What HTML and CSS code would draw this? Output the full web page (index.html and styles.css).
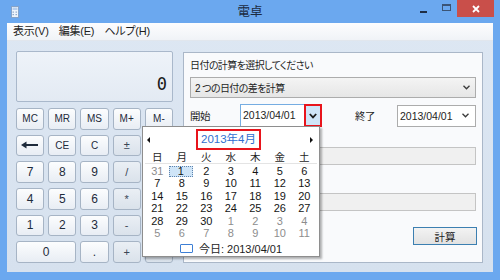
FILE: index.html
```html
<!DOCTYPE html>
<html lang="ja">
<head>
    <meta charset="UTF-8">
    <meta name="viewport" content="width=device-width, initial-scale=1.0">
    <title>電卓</title>
    <link rel="stylesheet" href="styles.css">
</head>
<body>
<div class="window">
    <div class="titlebar">
        <div class="app-icon">
            <svg width="8" height="12" viewBox="0 0 8 12">
                <rect x="0.5" y="0.5" width="7" height="11" fill="#eef4fb" stroke="#86a3c8"/>
                <rect x="1.5" y="1.5" width="5" height="2.5" fill="#b7cfee"/>
                <rect x="1.5" y="5.5" width="1.5" height="1.2" fill="#8fa9cb"/>
                <rect x="4.5" y="5.5" width="1.5" height="1.2" fill="#8fa9cb"/>
                <rect x="1.5" y="8" width="1.5" height="1.2" fill="#8fa9cb"/>
                <rect x="4.5" y="8" width="1.5" height="1.2" fill="#8fa9cb"/>
            </svg>
        </div>
        <div class="title">電卓</div>
        <div class="controls">
            <span class="ctl ctl-min"><i></i></span>
            <span class="ctl ctl-max"><i></i></span>
            <span class="ctl ctl-close">
                <svg width="8" height="8" viewBox="0 0 8 8">
                    <path d="M1 1 L7 7 M7 1 L1 7" stroke="#fff" stroke-width="1.8"/>
                </svg>
            </span>
        </div>
    </div>

    <div class="client">
        <div class="menubar">
            <span>表示(V)</span>
            <span>編集(E)</span>
            <span>ヘルプ(H)</span>
        </div>

        <div class="main">
            <div class="calc">
                <div class="display">0</div>
                <div class="keys">
                    <button class="key mem">MC</button>
                    <button class="key mem">MR</button>
                    <button class="key mem">MS</button>
                    <button class="key mem">M+</button>
                    <button class="key mem">M-</button>

                    <button class="key">
                        <svg width="18" height="8" viewBox="0 0 18 8">
                            <path d="M4 4 H17" stroke="#1e2b3b" stroke-width="2"/>
                            <path d="M0 4 L5.5 0.5 V7.5 Z" fill="#1e2b3b"/>
                        </svg>
                    </button>
                    <button class="key mem">CE</button>
                    <button class="key mem">C</button>
                    <button class="key op">±</button>
                    <button class="key op">√</button>

                    <button class="key">7</button>
                    <button class="key">8</button>
                    <button class="key">9</button>
                    <button class="key op">/</button>
                    <button class="key op">%</button>

                    <button class="key">4</button>
                    <button class="key">5</button>
                    <button class="key">6</button>
                    <button class="key op">*</button>
                    <button class="key op">1/x</button>

                    <button class="key">1</button>
                    <button class="key">2</button>
                    <button class="key">3</button>
                    <button class="key op">-</button>
                    <button class="key op equals">=</button>

                    <button class="key zero">0</button>
                    <button class="key">.</button>
                    <button class="key op">+</button>
                </div>
            </div>

            <div class="panel">
                <div class="label">日付の計算を選択してください</div>
                <div class="combo">
                    <span class="jp">2 つの日付の差を計算</span>
                    <svg class="chevron" width="7" height="5" viewBox="0 0 7 5">
                        <path d="M0.5 0.8 L3.5 3.8 L6.5 0.8" fill="none" stroke="#3a3a3a" stroke-width="1.3"/>
                    </svg>
                </div>

                <div class="dates">
                    <span class="date-label">開始</span>
                    <div class="picker active">
                        <span class="picker-text">2013/04/01</span>
                        <span class="picker-btn">
                            <svg width="8" height="6" viewBox="0 0 8 6">
                                <path d="M0.8 1 L4 4.4 L7.2 1" fill="none" stroke="#1b1b1b" stroke-width="1.8"/>
                            </svg>
                        </span>

                        <div class="calendar">
                            <div class="cal-head">
                                <span class="cal-prev"></span>
                                <span class="cal-title">2013年4月</span>
                                <span class="cal-next"></span>
                            </div>
                            <div class="cal-week">
                                <span>日</span><span>月</span><span>火</span><span>水</span><span>木</span><span>金</span><span>土</span>
                            </div>
                            <div class="cal-days">
                                <span class="other">31</span><span class="sel">1</span><span>2</span><span>3</span><span>4</span><span>5</span><span>6</span>
                                <span>7</span><span>8</span><span>9</span><span>10</span><span>11</span><span>12</span><span>13</span>
                                <span>14</span><span>15</span><span>16</span><span>17</span><span>18</span><span>19</span><span>20</span>
                                <span>21</span><span>22</span><span>23</span><span>24</span><span>25</span><span>26</span><span>27</span>
                                <span>28</span><span>29</span><span>30</span><span class="other">1</span><span class="other">2</span><span class="other">3</span><span class="other">4</span>
                                <span class="other">5</span><span class="other">6</span><span class="other">7</span><span class="other">8</span><span class="other">9</span><span class="other">10</span><span class="other">11</span>
                            </div>
                            <div class="cal-today">
                                <span class="today-box"></span>
                                <span>今日: 2013/04/01</span>
                            </div>
                        </div>
                    </div>

                    <span class="date-label end">終了</span>
                    <div class="picker">
                        <span class="picker-text">2013/04/01</span>
                        <svg class="chevron" width="7" height="5" viewBox="0 0 7 5">
                            <path d="M0.5 0.8 L3.5 3.8 L6.5 0.8" fill="none" stroke="#3a3a3a" stroke-width="1.3"/>
                        </svg>
                    </div>
                </div>

                <div class="field first"></div>
                <div class="field second"></div>

                <button class="calc-btn">計算</button>
            </div>
        </div>
    </div>
</div>
</body>
</html>
```

FILE: styles.css
```css
body {
    margin: 0;
    background: #6ba8ef;
    font-family: "Liberation Sans", "Noto Sans CJK JP", sans-serif;
    font-feature-settings: "palt";
    color: #1e1e1e;
    overflow: hidden;
}
.window {
    width: 500px;
    height: 280px;
    display: flex;
    flex-direction: column;
}

/* title bar */
.titlebar {
    height: 23px;
    flex: none;
    display: grid;
    grid-template-columns: 1fr auto 1fr;
}
.app-icon {
    padding: 6px 0 0 11px;
}
.app-icon svg {
    display: block;
}
.title {
    font-size: 12.5px;
    line-height: 25px;
    color: #1c2b41;
}
.controls {
    justify-self: end;
    display: flex;
    height: 17px;
    margin-right: 6px;
}
.ctl {
    height: 17px;
    display: flex;
    align-items: center;
    justify-content: center;
}
.ctl-min {
    width: 23px;
}
.ctl-min i {
    width: 7px;
    height: 2px;
    margin-top: 7px;
    background: #1e2d44;
}
.ctl-max {
    width: 22px;
}
.ctl-max i {
    width: 9px;
    height: 7px;
    margin-top: -2px;
    box-sizing: border-box;
    border: 1px solid #3b5475;
    border-top-width: 2px;
}
.ctl-close {
    width: 37px;
    background: #c94f4a;
}

/* client area */
.client {
    flex: 1;
    margin: 0 7px 8px;
    background: linear-gradient(#dde7f3, #d6e1ee);
    display: flex;
    flex-direction: column;
}
.menubar {
    height: 17px;
    flex: none;
    display: flex;
    gap: 10px;
    padding-left: 6px;
    font-size: 11px;
    line-height: 17px;
    letter-spacing: -0.2px;
    background: linear-gradient(#fdfdfe, #f0f3f7);
    border-bottom: 1px solid #e1e6ed;
}
.main {
    flex: 1;
    min-height: 0;
    display: flex;
    gap: 10px;
    padding: 10px 10px 9px 9px;
}

/* calculator */
.calc {
    width: 157px;
    flex: none;
    display: flex;
    flex-direction: column;
    gap: 6px;
}
.display {
    height: 51px;
    box-sizing: border-box;
    border: 1px solid #a9b8cb;
    border-radius: 2px;
    background: linear-gradient(#eef3f9, #e3eaf3);
    display: flex;
    align-items: flex-end;
    justify-content: flex-end;
    padding: 0 5px 8px 0;
    font: 17px/1 "DejaVu Sans Mono", monospace;
    color: #1a1a1a;
}
.keys {
    flex: 1;
    display: grid;
    grid-template-columns: repeat(5, 1fr);
    grid-template-rows: repeat(6, 1fr);
    column-gap: 4px;
    row-gap: 5px;
}
.key {
    padding: 0;
    border: 1px solid #a6b4c5;
    border-radius: 3px;
    background: linear-gradient(#fcfdfe, #e8edf4);
    font: 12px "Liberation Sans", sans-serif;
    color: #1e2b3b;
    display: flex;
    align-items: center;
    justify-content: center;
}
.key.mem {
    font-size: 10px;
}
.key.op {
    background: linear-gradient(#eaeff5, #dae2eb);
    color: #3a4756;
    font-size: 11px;
}
.key.zero {
    grid-column: span 2;
}
.key.equals {
    grid-row: span 2;
}

/* date panel */
.panel {
    flex: 1;
    margin-top: 1px;
    border: 1px solid #aab7c8;
    background: #f9fafc;
    padding: 6px 6px 0;
    display: flex;
    flex-direction: column;
    font-size: 10px;
}
.label,
.jp,
.date-label {
    letter-spacing: -0.6px;
}
.label {
    line-height: 13px;
}
.combo {
    margin-top: 5px;
    height: 21px;
    box-sizing: border-box;
    border: 1px solid #acacac;
    background: linear-gradient(#f4f4f4, #e6e6e6);
    display: flex;
    align-items: center;
    justify-content: space-between;
    padding: 0 5px 0 4px;
}
.chevron {
    display: block;
}
.dates {
    margin-top: 6px;
    height: 23px;
    display: flex;
    align-items: center;
}
.date-label {
    width: 50px;
    font-size: 10.5px;
}
.date-label.end {
    width: 42px;
    margin-left: 33px;
}
.picker {
    position: relative;
    width: 79px;
    height: 22px;
    box-sizing: border-box;
    border: 1px solid #acacac;
    background: #fff;
    display: flex;
    align-items: center;
    justify-content: space-between;
    padding: 0 6px 0 2px;
}
.picker.active {
    width: 82px;
    height: 23px;
    border: none;
    padding: 0;
    background: none;
}
.picker-text {
    font-size: 10.5px;
}
.picker.active .picker-text {
    width: 64px;
    height: 23px;
    box-sizing: border-box;
    border: 1px solid #76ade2;
    border-right: none;
    background: #fff;
    padding-left: 2px;
    line-height: 21px;
}
.picker-btn {
    width: 18px;
    height: 23px;
    box-sizing: border-box;
    border: 2px solid #e8141c;
    background: #cfe5f8;
    display: flex;
    align-items: center;
    justify-content: center;
}
.field {
    height: 18px;
    box-sizing: border-box;
    border: 1px solid #c4c4c4;
    background: #f0f0f0;
}
.field.first {
    margin-top: 20px;
}
.field.second {
    margin-top: 28px;
}
.calc-btn {
    align-self: flex-end;
    margin: 16px -1px 0 0;
    width: 64px;
    height: 18px;
    padding: 0;
    border: 1px solid #3c7fb1;
    background: linear-gradient(#f3f3f3, #e2e2e2);
    font: 10.5px "Liberation Sans", "Noto Sans CJK JP", sans-serif;
    color: #1e1e1e;
}

/* calendar dropdown */
.calendar {
    position: absolute;
    top: 22px;
    right: 2px;
    z-index: 2;
    width: 178px;
    height: 131px;
    box-sizing: border-box;
    border: 1px solid #8e8e8e;
    background: #fff;
    box-shadow: 2px 2px 2px rgba(0, 0, 0, 0.3);
    padding: 1px 2px 0;
}
.cal-head {
    height: 23px;
    display: grid;
    grid-template-columns: 24px 1fr 24px;
    align-items: center;
}
.cal-prev {
    justify-self: start;
    margin-left: 2px;
    width: 0;
    height: 0;
    border-top: 3px solid transparent;
    border-bottom: 3px solid transparent;
    border-right: 3px solid #111;
}
.cal-next {
    justify-self: end;
    margin-right: 4px;
    width: 0;
    height: 0;
    border-top: 3px solid transparent;
    border-bottom: 3px solid transparent;
    border-left: 3px solid #111;
}
.cal-title {
    justify-self: center;
    margin-right: 5px;
    border: 2px solid #e8141c;
    padding: 0 3px;
    line-height: 17px;
    font-size: 11.5px;
    color: #2f6fd0;
}
.cal-week,
.cal-days {
    display: grid;
    grid-template-columns: repeat(7, 24.5px);
    text-align: center;
}
.cal-week {
    height: 12px;
    line-height: 12px;
    font-size: 10.5px;
    border-bottom: 1px solid #e4e4e4;
}
.cal-days {
    margin-top: 1px;
    grid-auto-rows: 12.4px;
    line-height: 12.4px;
    font-size: 11px;
    color: #151515;
}
.cal-days .other {
    color: #8d8d8d;
}
.cal-days .sel {
    margin: 1px 1px 0 -1px;
    box-sizing: border-box;
    border: 1px dotted #5f84ad;
    background: #cfe5f8;
    line-height: 9.4px;
}
.cal-today {
    margin-top: 2px;
    height: 14px;
    display: flex;
    align-items: center;
    justify-content: center;
    gap: 6px;
    font-size: 11px;
}
.today-box {
    width: 13px;
    height: 9px;
    box-sizing: border-box;
    border: 1.5px solid #3d7fd5;
    border-radius: 1px;
}
```
